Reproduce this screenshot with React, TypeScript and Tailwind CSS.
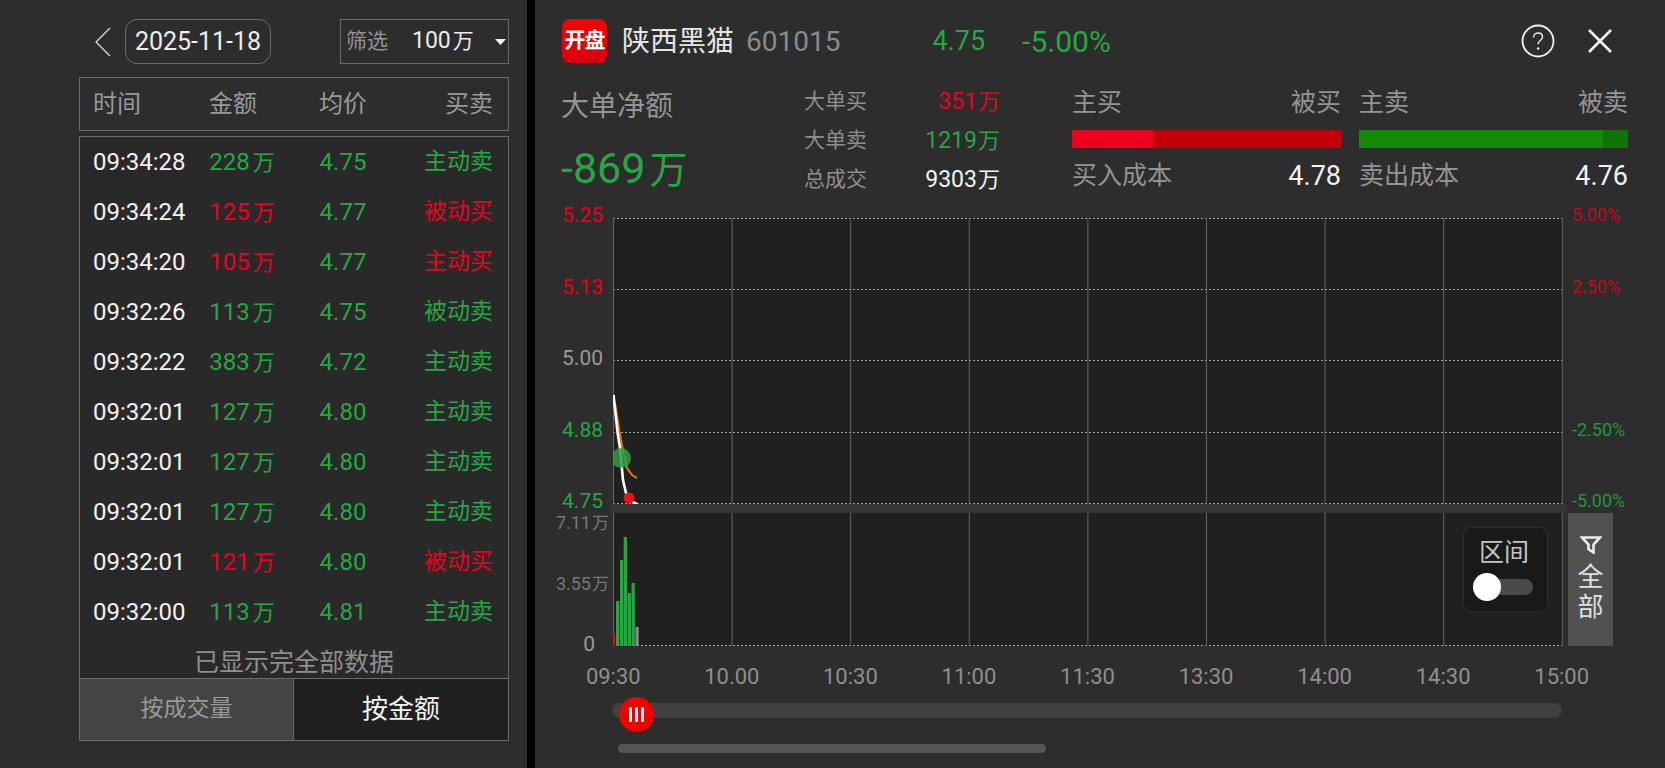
import React from 'react';

const GREEN = 'text-[#27a644]';
const RED = 'text-[#ec0020]';

interface ITrade {
  time: string;
  amount: string;
  price: string;
  side: string;
}

const trades: ITrade[] = [
  { time: '09:34:28', amount: '228', price: '4.75', side: '主动卖' },
  { time: '09:34:24', amount: '125', price: '4.77', side: '被动买' },
  { time: '09:34:20', amount: '105', price: '4.77', side: '主动买' },
  { time: '09:32:26', amount: '113', price: '4.75', side: '被动卖' },
  { time: '09:32:22', amount: '383', price: '4.72', side: '主动卖' },
  { time: '09:32:01', amount: '127', price: '4.80', side: '主动卖' },
  { time: '09:32:01', amount: '127', price: '4.80', side: '主动卖' },
  { time: '09:32:01', amount: '127', price: '4.80', side: '主动卖' },
  { time: '09:32:01', amount: '121', price: '4.80', side: '被动买' },
  { time: '09:32:00', amount: '113', price: '4.81', side: '主动卖' },
];

const times = ['09:30', '10.00', '10:30', '11:00', '11:30', '13:30', '14:00', '14:30', '15:00'];
const verticals = [1, 2, 3, 4, 5, 6, 7, 8, 9];

const LeftPanel = () => (
  <div className="w-[527px] h-full shrink-0 flex flex-col pl-[79px] pr-[18px] pt-[19px] pb-[27px] bg-[#2d2d2d]">
    <div className="h-[45px] flex items-center shrink-0">
      <svg width="16" height="30" viewBox="0 0 16 30" className="ml-[16px]">
        <polyline points="15,1 1,15 15,29" fill="none" stroke="#e4e4e4" strokeWidth="1.2" />
      </svg>
      <div className="ml-[14px] w-[146px] h-[45px] flex items-center justify-center rounded-xl border border-[#6a6a6a] text-[25px] text-[#ececec]">
        2025-11-18
      </div>
      <div className="ml-auto w-[169px] h-[45px] flex items-center border border-[#6a6a6a] pl-[5px]">
        <span className="text-[21px] text-[#949494]">筛选</span>
        <span className="ml-[24px] text-[23px] text-[#ececec] whitespace-nowrap">
          100<span className="ml-[2px] text-[21px]">万</span>
        </span>
        <svg width="11" height="6" viewBox="0 0 11 6" className="ml-[21px]">
          <polygon points="0,0 11,0 5.5,6" fill="#f2f2f2" />
        </svg>
      </div>
    </div>

    <div className="mt-[13px] h-[54px] shrink-0 grid grid-cols-[116px_48px_172px_1fr] items-center pl-[13px] pr-[15px] border border-[#6a6a6a] text-[24px] text-[#9a9a9a]">
      <span>时间</span>
      <span>金额</span>
      <span className="text-center">均价</span>
      <span className="text-right">买卖</span>
    </div>

    <div className="mt-[5px] flex-1 flex flex-col border border-b-0 border-[#6a6a6a] bg-[#292929]">
      {trades.map((t, i) => {
        const isBuy = t.side.endsWith('买');
        return (
          <div
            key={i}
            className="h-[50px] shrink-0 grid grid-cols-[116px_66px_136px_1fr] items-center pl-[13px] pr-[15px] text-[24px]">
            <span className="text-[#f2f2f2]">{t.time}</span>
            <span className={`text-center whitespace-nowrap ${isBuy || t.amount === '105' ? RED : GREEN}`}>
              {t.amount}
              <span className="ml-[3px] text-[22px]">万</span>
            </span>
            <span className={`text-center ${GREEN}`}>{t.price}</span>
            <span className={`text-right text-[23px] ${isBuy ? RED : GREEN}`}>{t.side}</span>
          </div>
        );
      })}
      <div className="mt-[11px] h-[30px] leading-[30px] text-center text-[25px] text-[#8e8e8e]">已显示完全部数据</div>
    </div>

    <div className="h-[63px] shrink-0 flex border border-[#6a6a6a]">
      <div className="w-[214px] flex items-center justify-center bg-[#444444] border-r border-[#6a6a6a] text-[23px] text-[#9a9a9a]">
        按成交量
      </div>
      <div className="flex-1 flex items-center justify-center bg-[#202020] text-[26px] text-[#f4f4f4]">按金额</div>
    </div>
  </div>
);

const TopBar = () => (
  <div className="h-[44px] shrink-0 flex items-center pl-[27px] pr-[52px]">
    <div className="w-[45px] h-[44px] rounded-lg flex items-center justify-center bg-gradient-to-b from-[#f80000] to-[#d80010] text-[21px] font-bold tracking-[-1px] text-white">
      开盘
    </div>
    <span className="ml-[15px] pt-[1px] text-[28px] text-[#e6e6e6]">陕西黑猫</span>
    <span className="ml-[12px] pt-[1px] text-[28px] text-[#8a8a8a]">601015</span>
    <span className={`ml-[92px] pt-[1px] text-[27px] ${GREEN}`}>4.75</span>
    <span className={`ml-[37px] pt-[1px] text-[30px] ${GREEN}`}>-5.00%</span>
    <svg width="34" height="34" viewBox="0 0 34 34" className="ml-auto">
      <circle cx="17" cy="17" r="15.5" fill="none" stroke="#f0f0f0" strokeWidth="1.8" />
      <path
        d="M12.5 13.5c0-2.8 2-4.5 4.6-4.5s4.4 1.6 4.4 3.9c0 3.6-4.4 3.6-4.4 7.3"
        fill="none"
        stroke="#f0f0f0"
        strokeWidth="1.4"
      />
      <circle cx="17.1" cy="24.5" r="1.2" fill="#f0f0f0" />
    </svg>
    <svg width="26" height="26" viewBox="0 0 26 26" className="ml-[32px]">
      <path d="M2 2L24 24M24 2L2 24" fill="none" stroke="#f2f2f2" strokeWidth="2.6" />
    </svg>
  </div>
);

const Stat = ({ label, value, color }: { label: string; value: string; color: string }) => (
  <div className="h-[28px] flex items-center justify-between">
    <span className="text-[21px] text-[#8f8f8f]">{label}</span>
    <span className={`text-[23px] whitespace-nowrap ${color}`}>
      {value}
      <span className="ml-[1px] text-[22px]">万</span>
    </span>
  </div>
);

const FlowBlock = (props: {
  left: string;
  right: string;
  strong: string;
  soft: string;
  strongWidth: string;
  costLabel: string;
  cost: string;
  className: string;
}) => (
  <div className={`w-[269px] pt-[26px] ${props.className}`}>
    <div className="h-[28px] flex items-center justify-between text-[25px] text-[#949494]">
      <span>{props.left}</span>
      <span>{props.right}</span>
    </div>
    <div className={`mt-[13px] h-[18px] flex ${props.soft}`}>
      <div className={`h-full ${props.strong} ${props.strongWidth}`} />
    </div>
    <div className="mt-[12px] h-[32px] flex items-center justify-between">
      <span className="text-[25px] text-[#949494]">{props.costLabel}</span>
      <span className="text-[27px] text-[#f4f4f4]">{props.cost}</span>
    </div>
  </div>
);

const InfoRow = () => (
  <div className="h-[155px] shrink-0 flex">
    <div className="w-[269px] pl-[26px] pt-[26px]">
      <div className="h-[36px] leading-[36px] text-[28px] text-[#949494]">大单净额</div>
      <div className={`mt-[18px] h-[50px] leading-[50px] text-[43px] whitespace-nowrap ${GREEN}`}>
        -869<span className="ml-[4px] text-[38px]">万</span>
      </div>
    </div>
    <div className="w-[196px] pt-[25px] flex flex-col gap-[11px]">
      <Stat label="大单买" value="351" color={RED} />
      <Stat label="大单卖" value="1219" color={GREEN} />
      <Stat label="总成交" value="9303" color="text-[#f4f4f4]" />
    </div>
    <FlowBlock
      className="ml-[72px]"
      left="主买"
      right="被买"
      strong="bg-[#ec001f]"
      soft="bg-[#c00006]"
      strongWidth="w-[81px]"
      costLabel="买入成本"
      cost="4.78"
    />
    <FlowBlock
      className="ml-[18px]"
      left="主卖"
      right="被卖"
      strong="bg-[#138a04]"
      soft="bg-[#0f7407]"
      strongWidth="w-[244px]"
      costLabel="卖出成本"
      cost="4.76"
    />
  </div>
);

const PricePlot = () => (
  <svg width="950" height="286" viewBox="0 0 950 286" className="block bg-[#202020]">
    {[0.5, 71.5, 142.5, 214.5, 285.5].map((y) => (
      <line key={y} x1="0" x2="950" y1={y} y2={y} stroke="#a8a8a8" strokeWidth="1" strokeDasharray="2 2" />
    ))}
    {verticals.map((n) => (
      <line key={n} x1={(n - 1) * 118.6 + 0.5} x2={(n - 1) * 118.6 + 0.5} y1="0" y2="286" stroke="#666666" />
    ))}
    <polyline points="2,185 6.5,214 9.5,230 14,250 19,257 24,260" fill="none" stroke="#e87a00" strokeWidth="2" />
    <polyline points="0.5,177 4.5,214 7,230 10,262 13,275 19,284 24,286" fill="none" stroke="#ffffff" strokeWidth="2.6" />
    <circle cx="8" cy="240" r="10" fill="#2f9d45" fillOpacity="0.85" />
    <circle cx="16" cy="280" r="5.5" fill="#ee0f1c" />
  </svg>
);

const VolumePlot = () => (
  <svg width="950" height="133" viewBox="0 0 950 133" className="block bg-[#202020]">
    <line x1="0" x2="950" y1="132.5" y2="132.5" stroke="#a8a8a8" strokeDasharray="2 2" />
    {verticals.map((n) => (
      <line key={n} x1={(n - 1) * 118.6 + 0.5} x2={(n - 1) * 118.6 + 0.5} y1="0" y2="133" stroke="#666666" />
    ))}
    <rect x="0" y="120" width="2" height="13" fill="#ec0020" />
    <rect x="3" y="88" width="3.3" height="45" fill="#27a644" />
    <rect x="7" y="47" width="3.3" height="86" fill="#27a644" />
    <rect x="10.7" y="24" width="3.3" height="109" fill="#27a644" />
    <rect x="14.6" y="80" width="3.3" height="53" fill="#27a644" />
    <rect x="18.5" y="70" width="3.3" height="63" fill="#27a644" />
    <rect x="22.4" y="114" width="3.3" height="19" fill="#8a8a8a" />
  </svg>
);

const Chart = () => (
  <div className="shrink-0">
    <div className="h-[285px] flex">
      <div className="w-[78px] h-[310px] -mt-[15px] flex flex-col justify-between items-end pr-[10px] text-[21px] leading-[24px]">
        <span className={RED}>5.25</span>
        <span className={RED}>5.13</span>
        <span className="text-[#9a9a9a]">5.00</span>
        <span className={GREEN}>4.88</span>
        <span className={GREEN}>4.75</span>
      </div>
      <PricePlot />
      <div className="h-[310px] -mt-[15px] ml-[9px] flex flex-col justify-between text-[18px] leading-[24px]">
        <span className="text-[#c20a1e]">5.00%</span>
        <span className="text-[#c20a1e]">2.50%</span>
        <span>&nbsp;</span>
        <span className="text-[#27963e]">-2.50%</span>
        <span className="text-[#27963e]">-5.00%</span>
      </div>
    </div>
    <div className="ml-[75px] mt-[1px] w-[957px] h-[9px] bg-[#363636]" />
    <div className="h-[133px] flex">
      <div className="w-[78px] h-[141px] flex flex-col justify-between items-end pr-[4px] text-[18px] leading-[20px] text-[#777777]">
        <span className="whitespace-nowrap">
          7.11<span className="ml-[1px] text-[17px]">万</span>
        </span>
        <span className="whitespace-nowrap">
          3.55<span className="ml-[1px] text-[17px]">万</span>
        </span>
        <span className="pr-[14px] text-[21px] text-[#9a9a9a]">0</span>
      </div>
      <div className="relative">
        <VolumePlot />
        <div className="absolute right-[15px] top-[14px] w-[85px] h-[85px] flex flex-col items-center rounded-lg border border-[#2e2e2e] bg-[#191919]">
          <span className="mt-[10px] -ml-[3px] text-[25px] leading-[30px] text-[#c4c4c4]">区间</span>
          <div className="relative mt-[11px] -ml-[3px] w-[58px] h-[16px] rounded-full bg-[#4a4a4a]">
            <div className="absolute -left-[2px] -top-[6px] w-[28px] h-[28px] rounded-full bg-white" />
          </div>
        </div>
      </div>
      <div className="ml-[5px] w-[45px] flex flex-col items-center bg-[#515151] text-[26px] leading-[30px] text-[#e0e0e0]">
        <svg width="22" height="18" viewBox="0 0 22 18" className="mt-[23px] mb-[8px]">
          <path d="M2 1.5H20L13.5 8.5V16.5L8.5 13V8.5Z" fill="none" stroke="#ececec" strokeWidth="2.6" />
        </svg>
        <span>全</span>
        <span>部</span>
      </div>
    </div>
  </div>
);

const Timeline = () => (
  <>
    <div className="ml-[19px] mt-[17px] w-[1067px] grid grid-cols-9 h-[28px] leading-[28px] text-center text-[22px] text-[#8f8f8f]">
      {times.map((t) => (
        <span key={t}>{t}</span>
      ))}
    </div>
    <div className="relative ml-[77px] mt-[12px] w-[950px] h-[15px] rounded-full bg-[#404040]">
      <div className="absolute left-[7px] -top-[6px] w-[35px] h-[35px] rounded-full bg-[#f10000] flex items-center justify-center gap-[3px]">
        <i className="block w-[3px] h-[15px] bg-white" />
        <i className="block w-[3px] h-[15px] bg-white" />
        <i className="block w-[3px] h-[15px] bg-white" />
      </div>
    </div>
    <div className="ml-[83px] mt-[26px] w-[428px] h-[9px] rounded-full bg-[#565656]" />
  </>
);

const RightPanel = () => (
  <div className="flex-1 h-full flex flex-col pt-[19px] bg-[#2d2d2d] overflow-hidden">
    <TopBar />
    <InfoRow />
    <Chart />
    <Timeline />
  </div>
);

export default function App() {
  return (
    <div
      className="w-[1665px] h-[768px] flex bg-black overflow-hidden"
      style={{ fontFamily: 'Roboto, "Noto Sans CJK SC", sans-serif' }}>
      <LeftPanel />
      <div className="w-[8px] shrink-0 bg-black" />
      <RightPanel />
    </div>
  );
}
